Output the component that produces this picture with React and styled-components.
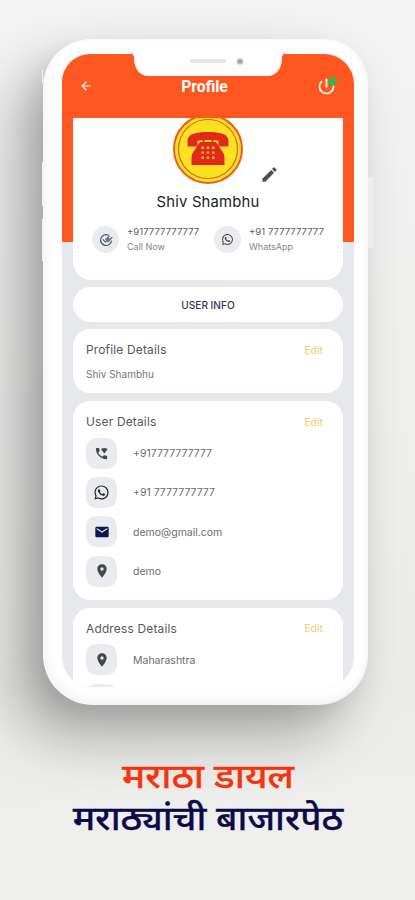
import React from 'react';
import styled, { createGlobalStyle } from 'styled-components';
import {
  MdArrowBack,
  MdEdit,
  MdEmail,
  MdLocationOn,
  MdPowerSettingsNew,
  MdWhatsapp,
  MdWifiCalling,
} from 'react-icons/md';

const userRows = [
  { icon: <MdWifiCalling />, text: '+917777777777' },
  { icon: <MdWhatsapp />, text: '+91 7777777777', color: '#1d1f22', size: 17 },
  { icon: <MdEmail />, text: 'demo@gmail.com', color: '#0b1550', size: 16 },
  { icon: <MdLocationOn />, text: 'demo', size: 16 },
];

const addressRows = [
  { icon: <MdLocationOn />, text: 'Maharashtra', size: 16 },
  { icon: <MdLocationOn />, text: '', size: 16 },
];

function DoubleCheck() {
  return (
    <svg width="14" height="14" viewBox="0 0 24 24" fill="none" stroke="#4a5270" strokeWidth="2">
      <path d="M16.5 4A9.3 9.3 0 1 0 21.300 13" />
      <path d="M6.500 11l4.500 4.500L17.500 9" />
      <path d="M11 11.500L18 5M14.500 15.500L23 7" />
    </svg>
  );
}

function Telephone() {
  return (
    <svg width="70" height="70" viewBox="0 0 70 70">
      <circle cx="35" cy="35" r="34" fill="#fbe122" stroke="#ee5b22" strokeWidth="2" />
      <circle cx="35" cy="35" r="29.5" fill="none" stroke="#d9661c" strokeWidth="1.2" />
      <path
        d="M14.500 31v-4c0-7 8-9 20.500-9s20.500 2 20.500 9v4c0 1-.6 1.500-1.500 1.500h-7c-1 0-1.500-.6-1.500-1.500v-4c-3-1.500-18-1.500-21 0v4c0 1-.6 1.500-1.500 1.500h-7c-1 0-1.500-.5-1.500-1.500z"
        fill="#df2a1b"
      />
      <path
        d="M27 28h2.500v-2.500h2V28h7v-2.500h2V28H43l7 10.500c1 1.500 1.500 3 1.500 5V51h-33v-7.500c0-2 .5-3.500 1.500-5z"
        fill="#df2a1b"
      />
      <path
        d="M28.500 32.500H31V35h-2.500zM33.700 32.500h2.500V35h-2.500zM39 32.500h2.500V35H39zM28.500 37.500H31V40h-2.500zM33.700 37.500h2.500V40h-2.500zM39 37.500h2.500V40H39zM28.500 42.500H31V45h-2.500zM33.700 42.500h2.500V45h-2.500zM39 42.500h2.500V45H39z"
        fill="#f7b52b"
      />
    </svg>
  );
}

function DetailCard({ title, rows }) {
  return (
    <Card>
      <CardHead>
        <h3>{title}</h3>
        <Edit>Edit</Edit>
      </CardHead>
      <Rows>
        {rows.map((row, index) => (
          <Row key={index}>
            <IconTile $color={row.color} $size={row.size}>
              {row.icon}
            </IconTile>
            <span>{row.text}</span>
          </Row>
        ))}
      </Rows>
    </Card>
  );
}

export default function App() {
  return (
    <>
      <GlobalStyle />
      <Poster>
        <Phone>
          <SideButton $side="left" $top={31} $height={13} />
          <SideButton $side="left" $top={123} $height={44} />
          <SideButton $side="left" $top={180} $height={42} />
          <SideButton $side="right" $top={138} $height={71} />
          <Screen>
            <Notch>
              <svg width="152" height="23" viewBox="0 0 152 23">
                <path
                  d="M0 0h152c-1.600.3-2 1.500-2 4 0 11-6 18-15 18H17C8 22 2 15 2 4 2 1.500 1.600.3 0 0z"
                  fill="#fefefe"
                />
                <rect x="58" y="5" width="36" height="4" rx="2" fill="#e5e5e7" />
                <circle cx="108" cy="7.5" r="3.3" fill="#c0c0c2" />
                <circle cx="108" cy="7.5" r="1.6" fill="#98989b" />
              </svg>
            </Notch>
            <Header>
              <MdArrowBack size={14} />
              <h1>Profile</h1>
              <Power>
                <MdPowerSettingsNew size={21} />
                <i />
              </Power>
            </Header>
            <Content>
              <ProfileCard>
                <Avatar>
                  <Telephone />
                </Avatar>
                <Pencil>
                  <MdEdit size={19} />
                </Pencil>
                <h2>Shiv Shambhu</h2>
                <Contacts>
                  <Contact>
                    <Round>
                      <DoubleCheck />
                    </Round>
                    <div>
                      <b>+917777777777</b>
                      <small>Call Now</small>
                    </div>
                  </Contact>
                  <Contact>
                    <Round>
                      <MdWhatsapp size={13} />
                    </Round>
                    <div>
                      <b>+91 7777777777</b>
                      <small>WhatsApp</small>
                    </div>
                  </Contact>
                </Contacts>
              </ProfileCard>
              <InfoButton>USER INFO</InfoButton>
              <Card $height={64}>
                <CardHead>
                  <h3>Profile Details</h3>
                  <Edit>Edit</Edit>
                </CardHead>
                <p>Shiv Shambhu</p>
              </Card>
              <DetailCard title="User Details" rows={userRows} />
              <DetailCard title="Address Details" rows={addressRows} />
            </Content>
          </Screen>
        </Phone>
        <Caption>
          <Line $color="#f5330c" $stretch={1.15}>मराठा डायल</Line>
          <Line $color="#0b0a4a" $stretch={1.11}>मराठ्यांची बाजारपेठ</Line>
        </Caption>
      </Poster>
    </>
  );
}

const GlobalStyle = createGlobalStyle`
  * {
    box-sizing: border-box;
  }
  body {
    margin: 0;
  }
  h1, h2, h3, p {
    margin: 0;
  }
`;

const Poster = styled.div`
  width: 415px;
  height: 900px;
  overflow: hidden;
  padding: 39px 0 0 43px;
  font-family: Inter, 'Noto Sans', sans-serif;
  background: linear-gradient(175deg, #f4f4f4 0%, #efefee 45%, #ebebe9 75%, #f1f1f0 100%);
`;

const Phone = styled.div`
  position: relative;
  width: 325px;
  height: 666px;
  padding: 15px 14px 18px 19px;
  border-radius: 48px 44px 50px 50px;
  background: #fefefe;
  box-shadow:
    -26px 30px 60px rgba(0, 0, 0, 0.3),
    -8px 10px 24px rgba(0, 0, 0, 0.07),
    inset 4px -5px 10px rgba(0, 0, 0, 0.04),
    inset -3px 0 5px rgba(0, 0, 0, 0.03);
`;

const SideButton = styled.div`
  position: absolute;
  ${(props) => props.$side}: ${(props) => (props.$side === 'left' ? -1 : -5)}px;
  top: ${(props) => props.$top}px;
  width: ${(props) => (props.$side === 'left' ? 1 : 5)}px;
  height: ${(props) => props.$height}px;
  background: ${(props) => (props.$side === 'left' ? '#f1f1f1' : '#ececec')};
`;

const Screen = styled.div`
  position: relative;
  height: 633px;
  overflow: hidden;
  border-radius: 28px 30px 30px 30px;
  background: linear-gradient(#ff5722 188px, #e6e8eb 188px);
`;

const Notch = styled.div`
  position: absolute;
  top: 0;
  left: 70px;
  height: 23px;
`;

const Header = styled.header`
  display: flex;
  align-items: center;
  justify-content: space-between;
  height: 64px;
  padding: 0 17px;
  color: #fff;
  h1 {
    font: 700 15.7px Roboto, sans-serif;
    padding-top: 1px;
  }
`;

const Power = styled.div`
  position: relative;
  display: flex;
  i {
    position: absolute;
    top: 1px;
    right: 0;
    width: 9px;
    height: 9px;
    border-radius: 50%;
    background: #43ad50;
  }
`;

const Content = styled.main`
  display: flex;
  flex-direction: column;
  gap: 7px;
  padding: 0 11px;
`;

const ProfileCard = styled.section`
  position: relative;
  display: flex;
  flex-direction: column;
  align-items: center;
  height: 162px;
  overflow: hidden;
  border-radius: 0 0 18px 18px;
  background: #fff;
  h2 {
    margin-top: 12px;
    font-size: 14.8px;
    line-height: 20px;
    font-weight: 400;
    letter-spacing: 0.2px;
    color: #202124;
  }
`;

const Avatar = styled.div`
  height: 66px;
  margin-top: -4px;
`;

const Pencil = styled.div`
  position: absolute;
  top: 47px;
  left: 187px;
  color: #505154;
`;

const Contacts = styled.div`
  display: flex;
  gap: 13px;
  width: 100%;
  margin-top: 13px;
  padding-left: 19px;
`;

const Contact = styled.div`
  display: flex;
  align-items: center;
  gap: 8px;
  width: 109px;
  white-space: nowrap;
  b,
  small {
    display: block;
    line-height: 14px;
  }
  b {
    font-size: 9.6px;
    font-weight: 400;
    color: #5c5d60;
  }
  small {
    margin-top: 1px;
    font-size: 9px;
    color: #85868a;
  }
`;

const Round = styled.div`
  display: flex;
  flex: none;
  align-items: center;
  justify-content: center;
  width: 27px;
  height: 27px;
  border-radius: 50%;
  background: #e9ebee;
  color: #3a3c40;
`;

const InfoButton = styled.button`
  height: 35px;
  border: none;
  border-radius: 18px;
  background: #fff;
  font: 500 10.1px Inter, sans-serif;
  color: #34345c;
`;

const Card = styled.section`
  flex: none;
  height: ${(props) => (props.$height ? `${props.$height}px` : 'auto')};
  padding: 13px 20px 13px 13px;
  border-radius: 17px;
  background: #fff;
  & + & {
    margin-top: 1px;
  }
  h3 {
    font-size: 11.9px;
    line-height: 16px;
    font-weight: 400;
    letter-spacing: 0.2px;
    color: #57585b;
  }
  p {
    margin-top: 9px;
    font-size: 10px;
    line-height: 14px;
    color: #77787b;
  }
`;

const CardHead = styled.div`
  display: flex;
  justify-content: space-between;
  align-items: center;
`;

const Edit = styled.span`
  padding-top: 1px;
  font-size: 10.5px;
  line-height: 14px;
  color: #f3cd6b;
`;

const Rows = styled.div`
  display: flex;
  flex-direction: column;
  gap: 8.4px;
  margin-top: 7.5px;
`;

const Row = styled.div`
  display: flex;
  align-items: center;
  gap: 16px;
  font-size: 10.5px;
  color: #6c6d70;
  span {
    padding-top: 1px;
  }
`;

const IconTile = styled.div`
  display: flex;
  align-items: center;
  justify-content: center;
  width: 31px;
  height: 31px;
  border-radius: 10px;
  background: #e9ebee;
  color: ${(props) => props.$color || '#45474b'};
  svg {
    width: ${(props) => props.$size || 15}px;
    height: ${(props) => props.$size || 15}px;
  }
`;

const Caption = styled.div`
  width: 330px;
  margin-top: 50px;
  text-align: center;
`;

const Line = styled.div`
  font-size: 33px;
  line-height: 42px;
  font-weight: 500;
  white-space: nowrap;
  color: ${(props) => props.$color};
  -webkit-text-stroke: 0.3px ${(props) => props.$color};
  transform: scaleX(${(props) => props.$stretch});
`;
